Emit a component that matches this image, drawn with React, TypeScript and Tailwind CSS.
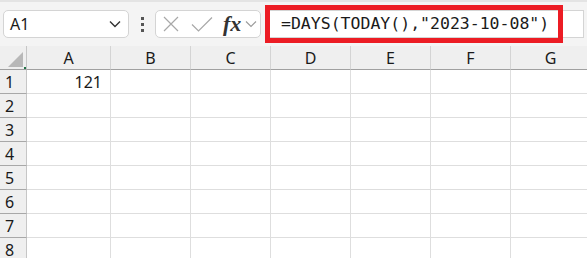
import React from "react";

const cols = ["A", "B", "C", "D", "E", "F", "G"];
const rows = [1, 2, 3, 4, 5, 6, 7, 8];

export default function App() {
  return (
    <div
      className="relative w-[587px] h-[258px] overflow-hidden bg-[#f4f4f4]"
      style={{ fontFamily: '"Noto Sans", "Open Sans", sans-serif' }}
    >
      <div className="h-[2px] bg-[#e4e4e4]" />
      {/* toolbar */}
      <div className="flex h-[44px] items-start pt-[8px]">
        <div className="ml-[3px] flex h-[28px] w-[126px] items-center justify-between rounded-[5px] border border-[#d4d4d4] bg-white pl-[6px] pr-[7px]">
          <span className="text-[16px] text-[#1a1a1a] leading-none">A1</span>
          <svg width="12" height="8" viewBox="0 0 12 8">
            <path d="M1 1.5 L6 6.5 L11 1.5" fill="none" stroke="#333" strokeWidth="1.4" />
          </svg>
        </div>
        <div className="flex w-[26px] h-[28px] flex-col items-center justify-center gap-[3px]">
          <div className="h-[3px] w-[3px] bg-[#555]" />
          <div className="h-[3px] w-[3px] bg-[#555]" />
          <div className="h-[3px] w-[3px] bg-[#555]" />
        </div>
        <div className="flex h-[28px] w-[106px] items-center rounded-[5px] border border-[#d4d4d4] bg-white">
          <svg width="16" height="16" viewBox="0 0 16 16" className="ml-[7px]">
            <path d="M1 1 L15 15 M15 1 L1 15" stroke="#a8a8a8" strokeWidth="1.2" fill="none" />
          </svg>
          <svg width="22" height="16" viewBox="0 0 22 16" className="ml-[12px]">
            <path d="M1 8.5 L7.5 15 L21 1.5" stroke="#a8a8a8" strokeWidth="1.2" fill="none" />
          </svg>
          <span
            className="ml-[10px] text-[22px] italic font-semibold leading-none text-[#333]"
            style={{ fontFamily: '"Liberation Serif", "DejaVu Serif", serif' }}
          >
            fx
          </span>
          <svg width="12" height="8" viewBox="0 0 12 8" className="ml-[4px]">
            <path d="M1 1.5 L6 6.5 L11 1.5" fill="none" stroke="#9a9a9a" strokeWidth="1.1" />
          </svg>
        </div>
        <div className="ml-[5px] flex h-[28px] w-[318px] items-center border border-[#d4d4d4] bg-white pl-[14px]">
          <span
            className="text-[16.5px] leading-none text-[#1a1a1a] whitespace-pre"
            style={{ fontFamily: '"DejaVu Sans Mono", "Liberation Mono", monospace' }}
          >
            =DAYS(TODAY(),"2023-10-08")
          </span>
        </div>
      </div>
      {/* red annotation */}
      <div className="absolute left-[265px] top-[5px] h-[38px] w-[298px] border-[5px] border-[#ec1c24]" />

      {/* grid */}
      <div className="grid grid-cols-[27px_84px_80px_80px_80px_80px_80px_80px] grid-rows-[24px_repeat(8,24px)] bg-white">
        <div className="relative border-r border-b border-r-[#c6c6c6] border-b-[#a0a0a0] bg-[#efefef]">
          <svg width="18" height="16" viewBox="0 0 18 16" className="absolute left-[6px] top-[6px]">
            <polygon points="17,0 17,15 2,15" fill="#b8b8b8" />
          </svg>
          <div className="absolute right-0 bottom-0 h-[2px] w-[2px] bg-[#217346]" />
        </div>
        {cols.map((c) => (
          <div
            key={c}
            className="flex items-center justify-center border-r border-b border-r-[#d4d4d4] border-b-[#a0a0a0] bg-[#efefef] text-[16px] text-[#1a1a1a]"
          >
            {c}
          </div>
        ))}
        {rows.map((r) => (
          <React.Fragment key={r}>
            <div className="flex items-center border-r border-b border-r-[#c6c6c6] border-b-[#a8a8a8] bg-[#efefef] pl-[5px] text-[16px] text-[#1a1a1a]">
              {r}
            </div>
            {cols.map((c) => (
              <div
                key={c}
                className="flex items-center justify-end border-r border-b border-[#dedede] pr-[8px] text-[16px] text-[#1a1a1a]"
              >
                {r === 1 && c === "A" ? "121" : ""}
              </div>
            ))}
          </React.Fragment>
        ))}
      </div>
    </div>
  );
}
